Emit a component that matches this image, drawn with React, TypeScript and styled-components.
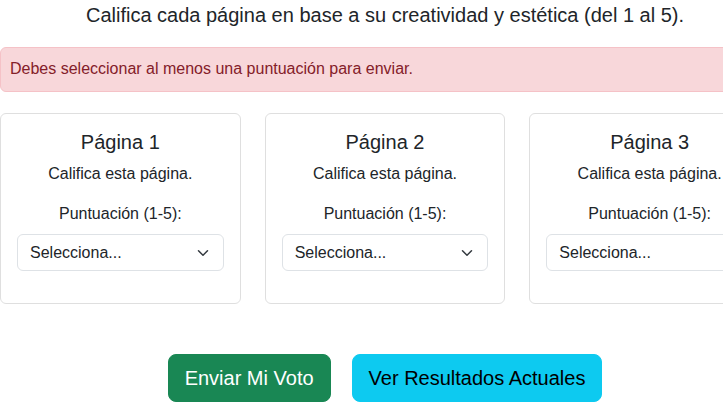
import React from "react";
import styled, { createGlobalStyle } from "styled-components";

const GlobalStyle = createGlobalStyle`
  html, body {
    margin: 0;
    padding: 0;
    overflow: hidden;
    background: #ffffff;
  }
  body {
    font-family: "Liberation Sans", Arial, sans-serif;
    color: #212529;
    font-size: 16px;
    line-height: 1.5;
  }
`;

const Page = styled.div`
  width: 770px;
  display: flex;
  flex-direction: column;
`;

const Intro = styled.p`
  margin: 0 0 17px;
  text-align: center;
  font-size: 20px;
  line-height: 30px;
  color: #212529;
`;

const Alert = styled.div`
  margin: 0 0 21px;
  padding: 9px 9px 10px;
  border: 1px solid #f5c2c7;
  border-radius: 6px;
  background: #f8d7da;
  color: #842029;
  font-size: 16px;
  line-height: 24px;
`;

const CardGrid = styled.div`
  display: grid;
  grid-template-columns: repeat(3, 1fr);
  gap: 24px;
`;

const Card = styled.div`
  border: 1px solid #dfdfdf;
  border-radius: 6px;
  padding: 16px;
  text-align: center;
  display: flex;
  flex-direction: column;
`;

const CardTitle = styled.h5`
  margin: 0 0 8px;
  font-size: 20px;
  line-height: 24px;
  font-weight: 400;
`;

const CardText = styled.p`
  margin: 0 0 16px;
  font-size: 16px;
  line-height: 24px;
`;

const Label = styled.label`
  display: block;
  margin: 0 0 8px;
  font-size: 16px;
  line-height: 24px;
`;

const SelectBox = styled.div`
  display: flex;
  align-items: center;
  justify-content: space-between;
  height: 37px;
  box-sizing: border-box;
  padding: 6px 12px;
  margin-bottom: 16px;
  border: 1px solid #dee2e6;
  border-radius: 6px;
  background: #fff;
  color: #212529;
  font-size: 16px;
  line-height: 24px;
  text-align: left;
`;

const Chevron = styled.svg`
  width: 16px;
  height: 12px;
  flex: none;
`;

const Actions = styled.div`
  margin-top: 50px;
  display: flex;
  justify-content: center;
  gap: 21px;
`;

const Button = styled.button<{ $variant: "success" | "info" }>`
  font-family: "Liberation Sans", Arial, sans-serif;
  font-size: 20px;
  line-height: 30px;
  padding: 8px 16px;
  border-radius: 8px;
  border: 1px solid
    ${(p) => (p.$variant === "success" ? "#198754" : "#0dcaf0")};
  background: ${(p) => (p.$variant === "success" ? "#198754" : "#0dcaf0")};
  color: ${(p) => (p.$variant === "success" ? "#ffffff" : "#000000")};
  cursor: pointer;
`;

const pages = [1, 2, 3];

export default function App() {
  return (
    <>
      <GlobalStyle />
      <Page>
        <Intro>
          Califica cada página en base a su creatividad y estética (del 1 al 5).
        </Intro>
        <Alert>Debes seleccionar al menos una puntuación para enviar.</Alert>
        <CardGrid>
          {pages.map((n) => (
            <Card key={n}>
              <CardTitle>Página {n}</CardTitle>
              <CardText>Califica esta página.</CardText>
              <Label>Puntuación (1-5):</Label>
              <SelectBox role="combobox">
                <span>Selecciona...</span>
                <Chevron viewBox="0 0 16 16">
                  <path
                    d="m2 5 6 6 6-6"
                    fill="none"
                    stroke="#343a40"
                    strokeWidth="2"
                    strokeLinecap="round"
                    strokeLinejoin="round"
                  />
                </Chevron>
              </SelectBox>
            </Card>
          ))}
        </CardGrid>
        <Actions>
          <Button $variant="success">Enviar Mi Voto</Button>
          <Button $variant="info">Ver Resultados Actuales</Button>
        </Actions>
      </Page>
    </>
  );
}
